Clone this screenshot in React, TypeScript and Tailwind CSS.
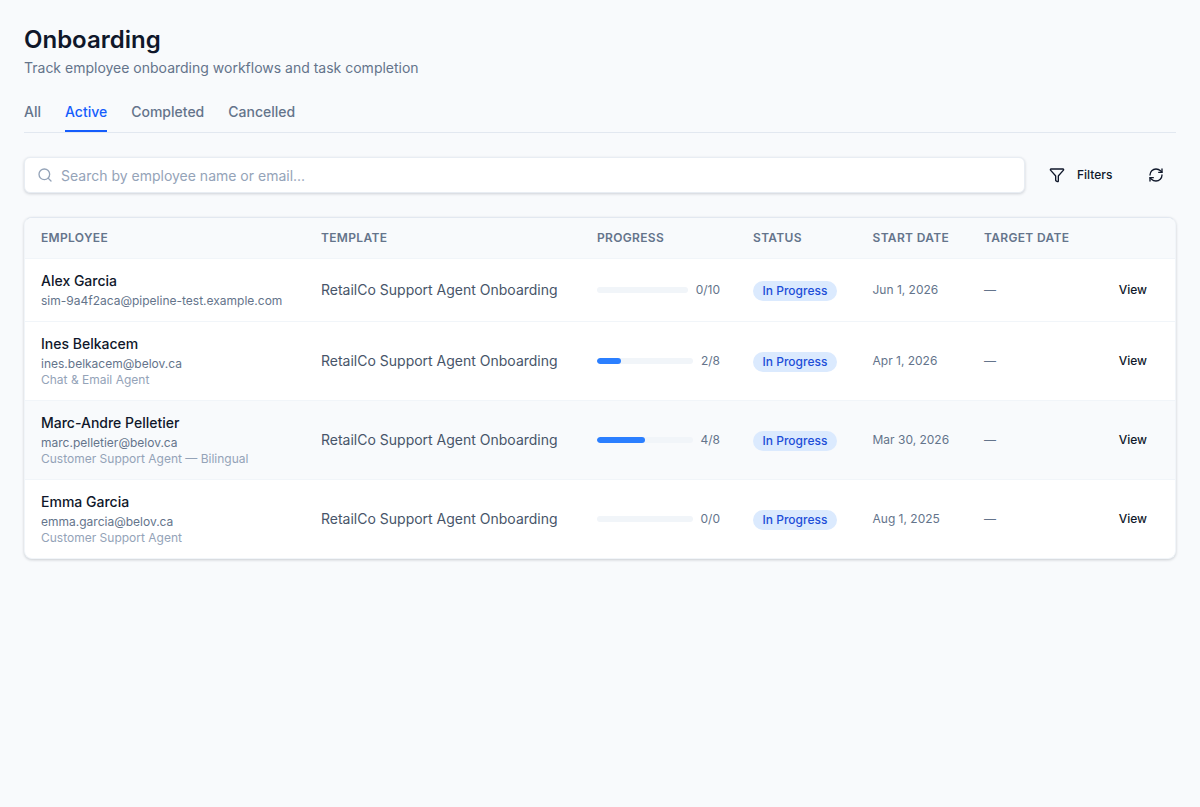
import React from "react";
import { Search, Funnel, RefreshCw } from "lucide-react";

const rows = [
  { name: "Alex Garcia", email: "sim-9a4f2aca@pipeline-test.example.com", role: "", pct: 0, label: "0/10", date: "Jun 1, 2026", h: "h-[63px]", hover: false },
  { name: "Ines Belkacem", email: "ines.belkacem@belov.ca", role: "Chat & Email Agent", pct: 25, label: "2/8", date: "Apr 1, 2026", h: "h-[79px]", hover: false },
  { name: "Marc-Andre Pelletier", email: "marc.pelletier@belov.ca", role: "Customer Support Agent — Bilingual", pct: 50, label: "4/8", date: "Mar 30, 2026", h: "h-[79px]", hover: true },
  { name: "Emma Garcia", email: "emma.garcia@belov.ca", role: "Customer Support Agent", pct: 0, label: "0/0", date: "Aug 1, 2025", h: "h-[78px]", hover: false },
];

const heads = [
  ["Employee", "w-[280px]"],
  ["Template", "w-[276px]"],
  ["Progress", "w-[156px]"],
  ["Status", "w-[119.5px]"],
  ["Start Date", "w-[111.5px]"],
  ["Target Date", "w-[120px]"],
  ["", ""],
];

const cell = "border-b border-[#f1f5f9] group-last:border-b-0";

export default function App() {
  return (
    <div className="min-h-[807px] bg-[#f8fafc] px-6 pt-6 text-[#0f172a] font-['Inter',sans-serif] antialiased">
      <h1 className="text-[24px] leading-[32px] font-semibold text-[#0f172a]">Onboarding</h1>
      <p className="mt-0.5 text-[14px] leading-[20px] text-[#64748b]">Track employee onboarding workflows and task completion</p>

      <div className="mt-[14px] flex gap-6 border-b border-[#e2e8f0] h-[41px]">
        {["All", "Active", "Completed", "Cancelled"].map((t) => (
          <div
            key={t}
            className={
              t === "Active"
                ? "h-[40px] pt-[10px] text-[14px] leading-[20px] font-medium text-[#155dfc] border-b-2 border-[#155dfc]"
                : "h-[40px] pt-[10px] text-[14px] leading-[20px] font-medium text-[#64748b]"
            }
          >
            {t}
          </div>
        ))}
      </div>

      <div className="mt-6 flex items-center h-9">
        <div className="flex-1 h-9 flex items-center rounded-md border border-[#e8edf3] bg-white pl-[11.5px] pr-3 shadow-[0_1px_3px_rgba(15,23,42,0.18)]">
          <Search className="w-4 h-4 text-[#94a3b8]" strokeWidth={2} />
          <span className="ml-[8.5px] text-[14px] text-[#94a3b8]">Search by employee name or email...</span>
        </div>
        <div className="ml-3 w-[87px] h-9 flex items-center pl-3 text-[12px] font-medium text-[#0f172a]">
          <Funnel className="w-4 h-4" strokeWidth={2} />
          <span className="ml-3">Filters</span>
        </div>
        <div className="ml-3 w-10 h-9 flex items-center justify-center text-[#0f172a]">
          <RefreshCw className="w-4 h-4" strokeWidth={2} />
        </div>
      </div>

      <div className="mt-6 overflow-hidden rounded-lg border border-[#f1f5f9] border-t-[#e2e8f0] bg-white shadow-[0_1px_3px_rgba(15,23,42,0.2)]">
        <table className="w-full table-fixed border-separate border-spacing-0">
          <thead>
            <tr className="h-[41px] bg-[#f8fafc]">
              {heads.map(([h, w], i) => (
                <th key={i} className={`${w} border-b border-[#f1f5f9] px-4 text-left text-[12px] font-semibold uppercase tracking-[0.33px] text-[#64748b]`}>{h}</th>
              ))}
            </tr>
          </thead>
          <tbody>
            {rows.map((r) => (
              <tr key={r.name} className={`group ${r.h} ${r.hover ? "bg-[#f8fafc]" : ""}`}>
                <td className={`${cell} px-4 align-middle`}>
                  <div className="text-[14px] leading-[20px] font-medium text-[#0f172a]">{r.name}</div>
                  <div className="mt-0.5 text-[12px] leading-[16px] text-[#64748b]">{r.email}</div>
                  {r.role && <div className="text-[12px] leading-[16px] text-[#94a3b8]">{r.role}</div>}
                </td>
                <td className={`${cell} px-4 text-[14px] leading-[20px] text-[#475569] whitespace-nowrap`}>RetailCo Support Agent Onboarding</td>
                <td className={`${cell} px-4`}>
                  <div className="flex items-center gap-2 w-[123px]">
                    <div className="flex-1 h-1.5 rounded-full bg-[#f1f5f9] overflow-hidden">
                      <div className="h-full rounded-full bg-[#2b7fff]" style={{ width: `${r.pct}%` }} />
                    </div>
                    <span className="text-[12px] text-[#64748b]">{r.label}</span>
                  </div>
                </td>
                <td className={`${cell} px-4`}>
                  <div className="flex pt-0.5">
                    <span className="flex items-center h-5 px-[9.5px] rounded-full bg-[#dbeafe] text-[12px] font-medium text-[#1d4ed8] whitespace-nowrap">In Progress</span>
                  </div>
                </td>
                <td className={`${cell} px-4 text-[12px] text-[#64748b] whitespace-nowrap`}>{r.date}</td>
                <td className={`${cell} px-4 text-[12px] text-[#64748b]`}>—</td>
                <td className={`${cell} pr-[28px] text-right text-[12px] font-medium text-[#0f172a]`}>View</td>
              </tr>
            ))}
          </tbody>
        </table>
      </div>
    </div>
  );
}
